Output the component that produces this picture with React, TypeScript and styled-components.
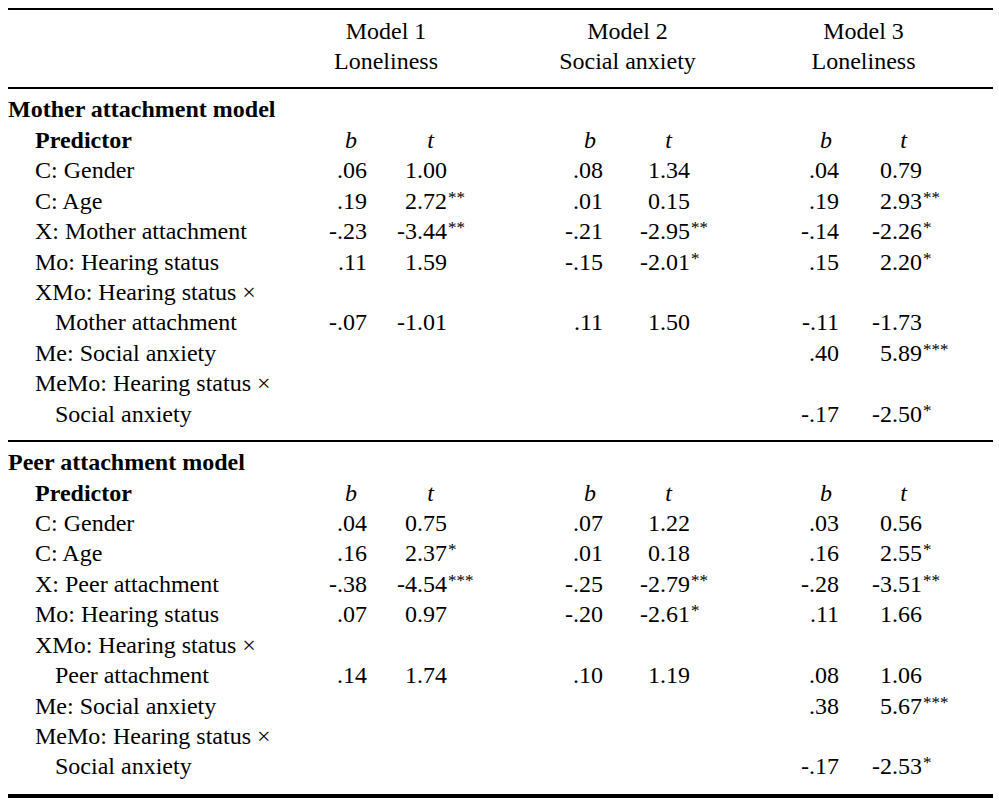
import React from "react";
import styled, { createGlobalStyle } from "styled-components";

const GlobalStyle = createGlobalStyle`
  body {
    margin: 0;
    background: #ffffff;
    color: #000000;
    font-family: "Liberation Serif", "Times New Roman", serif;
  }
`;

const COLS = "292px 67px 80px 93px 63px 87px 90px 59px 83px 71px";
const ROW_H = "30.44px";

const Table = styled.div`
  margin: 8px 0 0 8px;
  width: 985px;
  border-top: 2px solid #000;
  border-bottom: 4px solid #000;
  font-size: 24px;
`;

const Head = styled.div`
  display: grid;
  grid-template-columns: ${COLS};
  padding: 6px 0 10.5px;
  border-bottom: 2px solid #000;
`;

const ModelHead = styled.div<{ $col: number }>`
  grid-column: ${(p) => p.$col} / span 2;
  padding-left: 25px;
  display: flex;
  flex-direction: column;
  align-items: center;
  line-height: ${ROW_H};
  white-space: nowrap;
`;

const Section = styled.div<{ $top: number; $bottom: number; $rule?: boolean }>`
  padding: ${(p) => p.$top}px 0 ${(p) => p.$bottom}px;
  border-bottom: ${(p) => (p.$rule ? "2px solid #000" : "none")};
`;

const Row = styled.div`
  display: grid;
  grid-template-columns: ${COLS};
  height: ${ROW_H};
  line-height: ${ROW_H};
  white-space: nowrap;
`;

const Label = styled.div<{ $indent: number; $bold?: boolean }>`
  padding-left: ${(p) => p.$indent}px;
  font-weight: ${(p) => (p.$bold ? 700 : 400)};
`;

const Num = styled.div`
  display: flex;
  justify-content: flex-end;
`;

const Stars = styled.div`
  font-size: 17px;
  line-height: 17px;
  padding-top: 3px;
  padding-left: 1px;
`;

const StatHead = styled.div<{ $pad: number }>`
  text-align: right;
  padding-right: ${(p) => p.$pad}px;
  font-style: italic;
`;

type Cell = [string, string, string];
type Line = { label: string; indent: number; bold?: boolean; v?: Cell[] };

const split = (t: string): Cell => {
  const m = t.match(/^(.*?)(\**)$/) as RegExpMatchArray;
  return ["", m[1], m[2]];
};

const vals = (...xs: string[]): Cell[] => {
  const out: Cell[] = [];
  for (let i = 0; i < xs.length; i += 2) {
    const c = split(xs[i + 1]);
    c[0] = xs[i];
    out.push(c);
  }
  return out;
};

const blank: Cell = ["", "", ""];

const mother: Line[] = [
  { label: "C: Gender", indent: 27, v: vals(".06", "1.00", ".08", "1.34", ".04", "0.79") },
  { label: "C: Age", indent: 27, v: vals(".19", "2.72**", ".01", "0.15", ".19", "2.93**") },
  { label: "X: Mother attachment", indent: 27, v: vals("-.23", "-3.44**", "-.21", "-2.95**", "-.14", "-2.26*") },
  { label: "Mo: Hearing status", indent: 27, v: vals(".11", "1.59", "-.15", "-2.01*", ".15", "2.20*") },
  { label: "XMo: Hearing status \u00d7", indent: 27 },
  { label: "Mother attachment", indent: 47, v: vals("-.07", "-1.01", ".11", "1.50", "-.11", "-1.73") },
  { label: "Me: Social anxiety", indent: 27, v: [blank, blank, ...vals(".40", "5.89***")] },
  { label: "MeMo: Hearing status \u00d7", indent: 27 },
  { label: "Social anxiety", indent: 47, v: [blank, blank, ...vals("-.17", "-2.50*")] },
];

const peer: Line[] = [
  { label: "C: Gender", indent: 27, v: vals(".04", "0.75", ".07", "1.22", ".03", "0.56") },
  { label: "C: Age", indent: 27, v: vals(".16", "2.37*", ".01", "0.18", ".16", "2.55*") },
  { label: "X: Peer attachment", indent: 27, v: vals("-.38", "-4.54***", "-.25", "-2.79**", "-.28", "-3.51**") },
  { label: "Mo: Hearing status", indent: 27, v: vals(".07", "0.97", "-.20", "-2.61*", ".11", "1.66") },
  { label: "XMo: Hearing status \u00d7", indent: 27 },
  { label: "Peer attachment", indent: 47, v: vals(".14", "1.74", ".10", "1.19", ".08", "1.06") },
  { label: "Me: Social anxiety", indent: 27, v: [blank, blank, ...vals(".38", "5.67***")] },
  { label: "MeMo: Hearing status \u00d7", indent: 27 },
  { label: "Social anxiety", indent: 47, v: [blank, blank, ...vals("-.17", "-2.53*")] },
];

// padding-right for the italic b / t headers of each model
const headPads = [
  [10, 13],
  [7, 18],
  [7, 15],
];

const models = [
  { col: 2, name: "Model 1", dv: "Loneliness" },
  { col: 5, name: "Model 2", dv: "Social anxiety" },
  { col: 8, name: "Model 3", dv: "Loneliness" },
];

const DataRow: React.FC<{ line: Line }> = ({ line }) => (
  <Row>
    <Label $indent={line.indent} $bold={line.bold}>
      {line.label}
    </Label>
    {(line.v || [blank, blank, blank]).map((c, i) => (
      <React.Fragment key={i}>
        <Num>{c[0]}</Num>
        <Num>{c[1]}</Num>
        <Stars>{c[2]}</Stars>
      </React.Fragment>
    ))}
  </Row>
);

const SectionBody: React.FC<{ title: string; lines: Line[] }> = ({ title, lines }) => (
  <>
    <Row>
      <Label $indent={0} $bold>
        {title}
      </Label>
    </Row>
    <Row>
      <Label $indent={27} $bold>
        Predictor
      </Label>
      {headPads.map((p, i) => (
        <React.Fragment key={i}>
          <StatHead $pad={p[0]}>b</StatHead>
          <StatHead $pad={p[1]}>t</StatHead>
          <div />
        </React.Fragment>
      ))}
    </Row>
    {lines.map((l, i) => (
      <DataRow key={i} line={l} />
    ))}
  </>
);

const App: React.FC = () => {
  return (
    <>
      <GlobalStyle />
      <Table>
        <Head>
          {models.map((m) => (
            <ModelHead key={m.col} $col={m.col}>
              <span>{m.name}</span>
              <span>{m.dv}</span>
            </ModelHead>
          ))}
        </Head>
        <Section $top={5} $bottom={11.2} $rule>
          <SectionBody title="Mother attachment model" lines={mother} />
        </Section>
        <Section $top={4.7} $bottom={11.8}>
          <SectionBody title="Peer attachment model" lines={peer} />
        </Section>
      </Table>
    </>
  );
};

export default App;
